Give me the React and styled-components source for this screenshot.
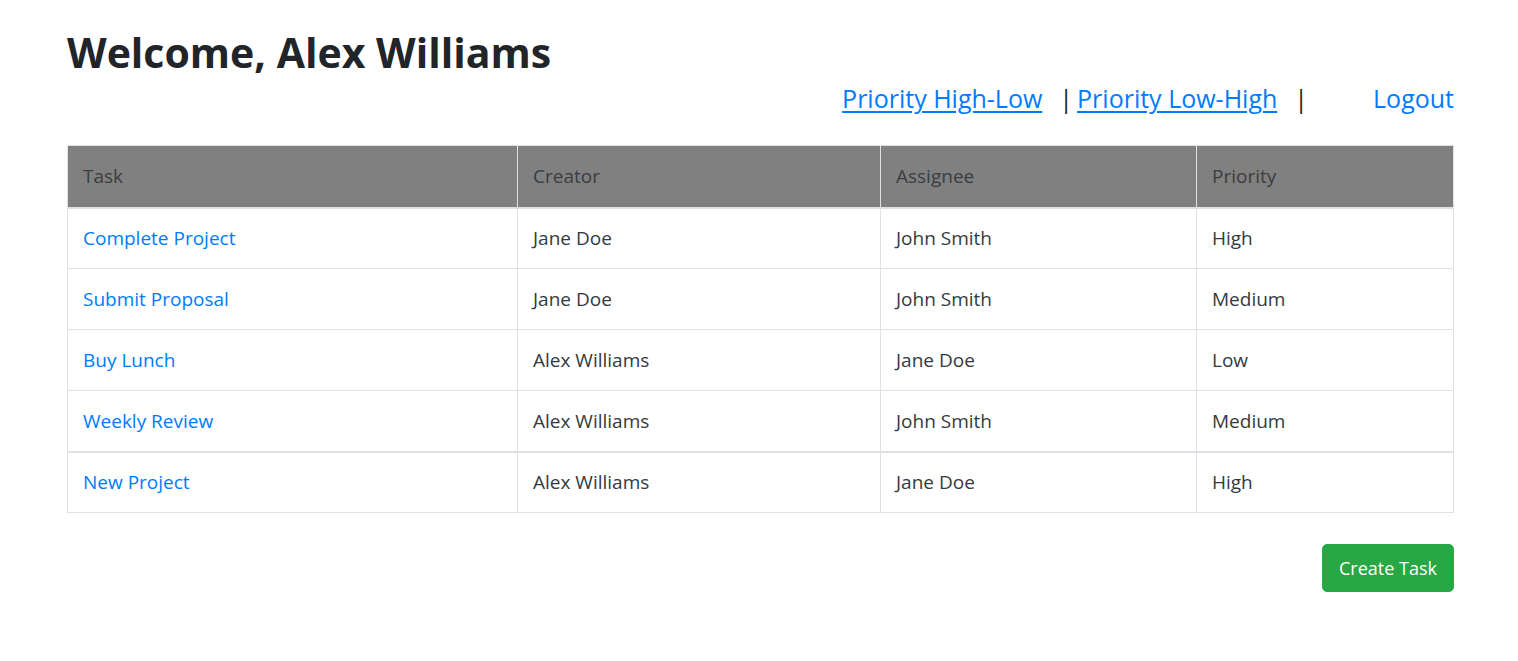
import React from 'react';
import styled, { createGlobalStyle } from 'styled-components';

const GlobalStyle = createGlobalStyle`
  * { box-sizing: border-box; }
  body {
    margin: 0;
    font-family: "Open Sans", "Noto Sans", sans-serif;
    color: #212529;
    background: #fff;
  }
`;

const Page = styled.div`
  padding: 24px 64px 40px 67px;
`;

const Title = styled.h1`
  margin: 0;
  font-size: 41px;
  font-weight: 700;
  line-height: 56px;
  color: #212529;
`;

const SortBar = styled.nav`
  display: flex;
  justify-content: flex-end;
  align-items: baseline;
  font-size: 25px;
  line-height: 30px;
  margin-top: 3px;
`;

const SortLink = styled.a`
  color: #007bff;
  text-decoration: ${p => (p.$plain ? 'none' : 'underline')};
  margin-left: ${p => p.$gap || 0};
  cursor: pointer;
  text-underline-offset: 3px;
  text-decoration-thickness: 2px;
`;

const Pipe = styled.span`
  color: #212529;
  margin: ${p => p.$m};
`;

const Table = styled.table`
  width: 100%;
  margin-top: 32px;
  border-collapse: collapse;
  font-size: 19px;
  table-layout: fixed;
`;

const HeadCell = styled.th`
  background: #808080;
  color: #3a3d41;
  font-weight: 400;
  text-align: left;
  padding: 0 15px;
  height: 62px;
  border: 1px solid #dee2e6;
  border-bottom: 2px solid #dee2e6;
  width: ${p => p.$w};
`;

const Row = styled.tr`
  border-top: ${p => (p.$thick ? '2px' : '1px')} solid #dee2e6;
`;

const Cell = styled.td`
  padding: 0 15px;
  height: 61px;
  border-left: 1px solid #dee2e6;
  border-right: 1px solid #dee2e6;
  border-bottom: 1px solid #dee2e6;
  color: #343a40;
`;

const TaskLink = styled.a`
  color: #007bff;
  text-decoration: none;
  cursor: pointer;
`;

const Actions = styled.div`
  display: flex;
  justify-content: flex-end;
  margin-top: 31px;
`;

const CreateButton = styled.button`
  background: #28a745;
  color: #fff;
  border: 1px solid #28a745;
  border-radius: 5px;
  font-family: inherit;
  font-size: 18px;
  line-height: 28px;
  padding: 9px 16px;
  cursor: pointer;
`;

const tasks = [
  { task: 'Complete Project', creator: 'Jane Doe', assignee: 'John Smith', priority: 'High' },
  { task: 'Submit Proposal', creator: 'Jane Doe', assignee: 'John Smith', priority: 'Medium' },
  { task: 'Buy Lunch', creator: 'Alex Williams', assignee: 'Jane Doe', priority: 'Low' },
  { task: 'Weekly Review', creator: 'Alex Williams', assignee: 'John Smith', priority: 'Medium' },
  { task: 'New Project', creator: 'Alex Williams', assignee: 'Jane Doe', priority: 'High' },
];

export default function App() {
  return (
    <Page>
      <GlobalStyle />
      <Title>Welcome, Alex Williams</Title>
      <SortBar>
        <SortLink>Priority High-Low</SortLink>
        <Pipe $m="0 4px 0 17px">|</Pipe>
        <SortLink>Priority Low-High</SortLink>
        <Pipe $m="0 0 0 17px">|</Pipe>
        <SortLink $plain $gap="65px">Logout</SortLink>
      </SortBar>
      <Table>
        <thead>
          <tr>
            <HeadCell $w="450px">Task</HeadCell>
            <HeadCell $w="363px">Creator</HeadCell>
            <HeadCell $w="316px">Assignee</HeadCell>
            <HeadCell>Priority</HeadCell>
          </tr>
        </thead>
        <tbody>
          {tasks.map((t, i) => (
            <Row key={t.task} $thick={i === 4}>
              <Cell><TaskLink>{t.task}</TaskLink></Cell>
              <Cell>{t.creator}</Cell>
              <Cell>{t.assignee}</Cell>
              <Cell>{t.priority}</Cell>
            </Row>
          ))}
        </tbody>
      </Table>
      <Actions>
        <CreateButton>Create Task</CreateButton>
      </Actions>
    </Page>
  );
}
